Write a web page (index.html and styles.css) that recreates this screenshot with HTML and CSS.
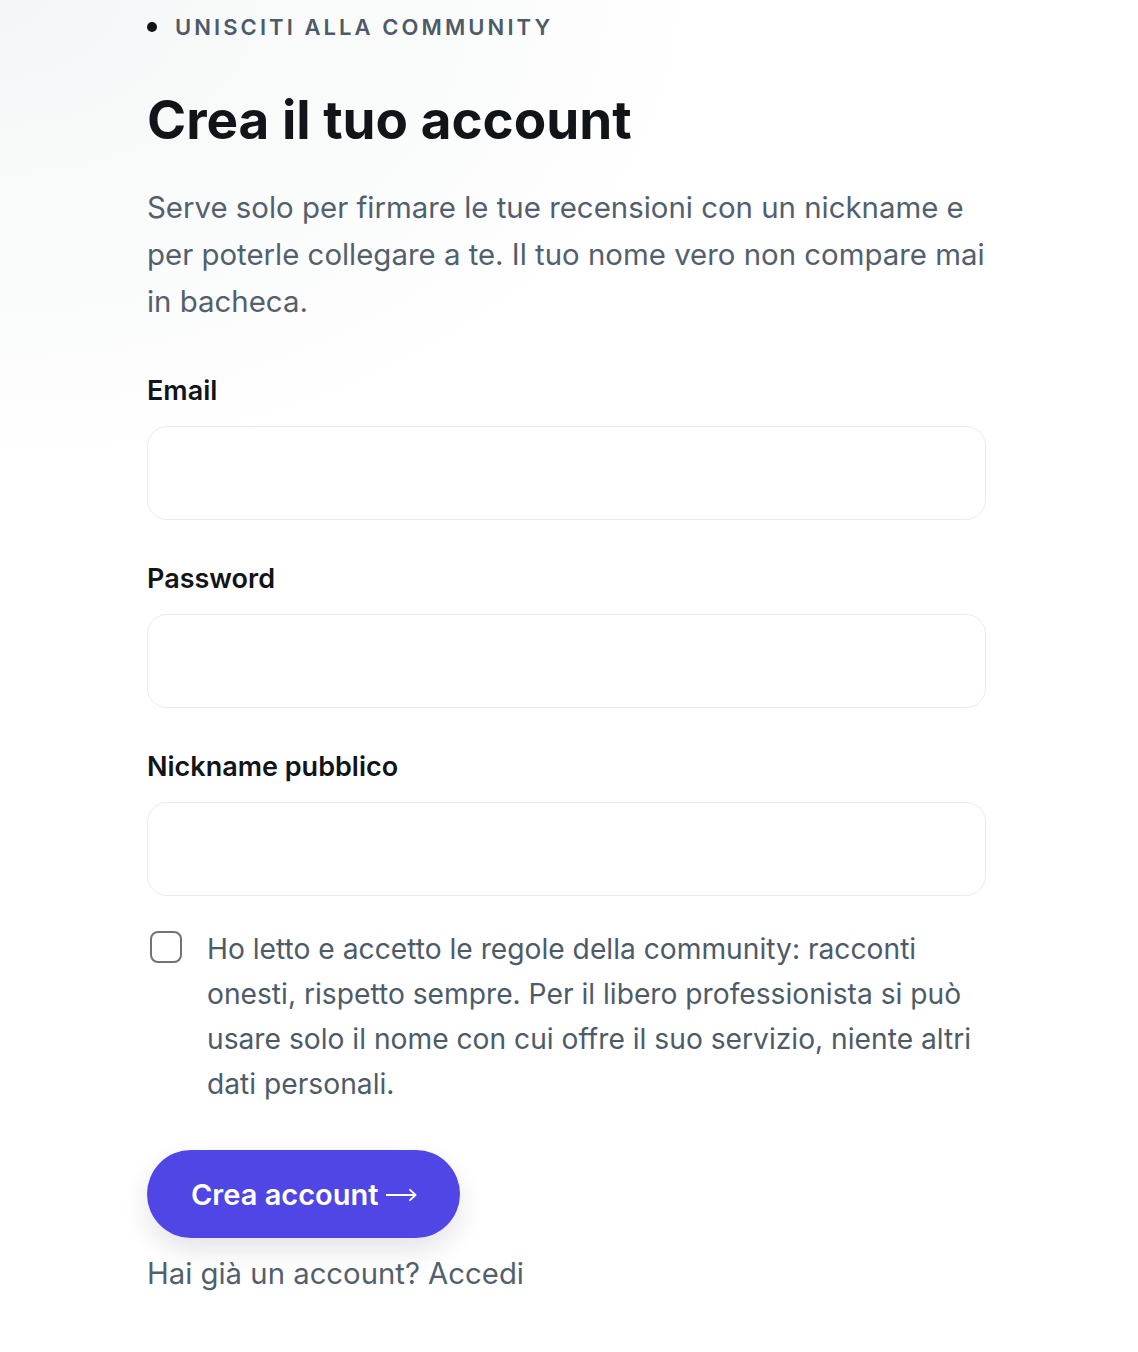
FILE: index.html
```html
<!DOCTYPE html>
<html lang="it">
<head>
<meta charset="utf-8">
<title>Crea il tuo account</title>
<link rel="stylesheet" href="styles.css">
</head>
<body>
<main class="page">
  <div class="eyebrow"><span class="dot"></span>UNISCITI ALLA COMMUNITY</div>
  <h1 class="title">Crea il tuo account</h1>
  <p class="lead">Serve solo per firmare le tue recensioni con un nickname e per poterle collegare a te. Il tuo nome vero non compare mai in bacheca.</p>
  <form class="form">
    <label class="field">
      <span class="label">Email</span>
      <input class="input" type="email">
    </label>
    <label class="field">
      <span class="label">Password</span>
      <input class="input" type="password">
    </label>
    <label class="field">
      <span class="label">Nickname pubblico</span>
      <input class="input" type="text">
    </label>
    <label class="consent">
      <span class="box"></span>
      <span class="consent-text">Ho letto e accetto le regole della community: racconti onesti, rispetto sempre. Per il libero professionista si può usare solo il nome con cui offre il suo servizio, niente altri dati personali.</span>
    </label>
    <button class="btn" type="button"><span>Crea account</span><svg class="arrow" width="31" height="14" viewBox="0 0 31 14" aria-hidden="true"><path d="M0 7H29.5M24 1.8L29.6 7L24 12.2" fill="none" stroke="#ffffff" stroke-width="1.8" stroke-linecap="round" stroke-linejoin="round"/></svg></button>
    <p class="alt">Hai già un account? Accedi</p>
  </form>
</main>
</body>
</html>
```

FILE: styles.css
```css
html, body {
  margin: 0;
  padding: 0;
}
body {
  min-height: 1352px;
  background: radial-gradient(ellipse 720px 480px at 0 0, #f5f6f7 0%, #f9fafa 45%, #ffffff 100%);
  background-color: #ffffff;
  font-family: Inter, "Noto Sans", sans-serif;
  color: #111418;
}
.page {
  padding: 12px 0 40px 147px;
  width: 839px;
}
.eyebrow {
  display: flex;
  align-items: center;
  gap: 18px;
  font-size: 22px;
  line-height: 30px;
  font-weight: 600;
  letter-spacing: 0.14em;
  color: #4d5b68;
}
.dot {
  width: 10px;
  height: 10px;
  border-radius: 50%;
  background: #111418;
  flex: none;
}
.title {
  margin: 47px 0 0;
  font-size: 53px;
  line-height: 62px;
  font-weight: 700;
  letter-spacing: 0;
  color: #111418;
}
.lead {
  margin: 33px 0 0;
  width: 846px;
  font-size: 29.4px;
  line-height: 47px;
  color: #52606d;
}
.form {
  display: flex;
  flex-direction: column;
  margin-top: 50px;
}
.field {
  display: flex;
  flex-direction: column;
  gap: 19px;
  margin-bottom: 43px;
}
.label {
  font-size: 27px;
  line-height: 32px;
  font-weight: 600;
  color: #111418;
}
.input {
  box-sizing: border-box;
  width: 100%;
  height: 94px;
  border: 1.5px solid #ebebec;
  border-radius: 20px;
  background: #ffffff;
  font: inherit;
  font-size: 26px;
  padding: 0 24px;
  outline: none;
}
.consent {
  display: flex;
  gap: 25px;
  margin-top: -12px;
  padding-left: 3px;
}
.box {
  flex: none;
  box-sizing: border-box;
  width: 32px;
  height: 32px;
  margin-top: 4px;
  border: 2.5px solid #6f7277;
  border-radius: 8px;
  background: #fff;
}
.consent-text {
  font-size: 28.2px;
  line-height: 45px;
  color: #4d5b68;
}
.btn {
  align-self: flex-start;
  display: flex;
  align-items: center;
  gap: 8px;
  margin-top: 43px;
  height: 88px;
  padding: 0 43px 0 44px;
  border: none;
  border-radius: 44px;
  background: #4f46e5;
  color: #ffffff;
  font-family: inherit;
  font-size: 29px;
  font-weight: 600;
  box-shadow: 0 12px 26px rgba(30, 30, 60, 0.12);
}
.arrow {
  flex: none;
  margin-top: 2px;
}
.alt {
  margin: 16px 0 0;
  font-size: 29.3px;
  line-height: 40px;
  color: #52606d;
}
```
